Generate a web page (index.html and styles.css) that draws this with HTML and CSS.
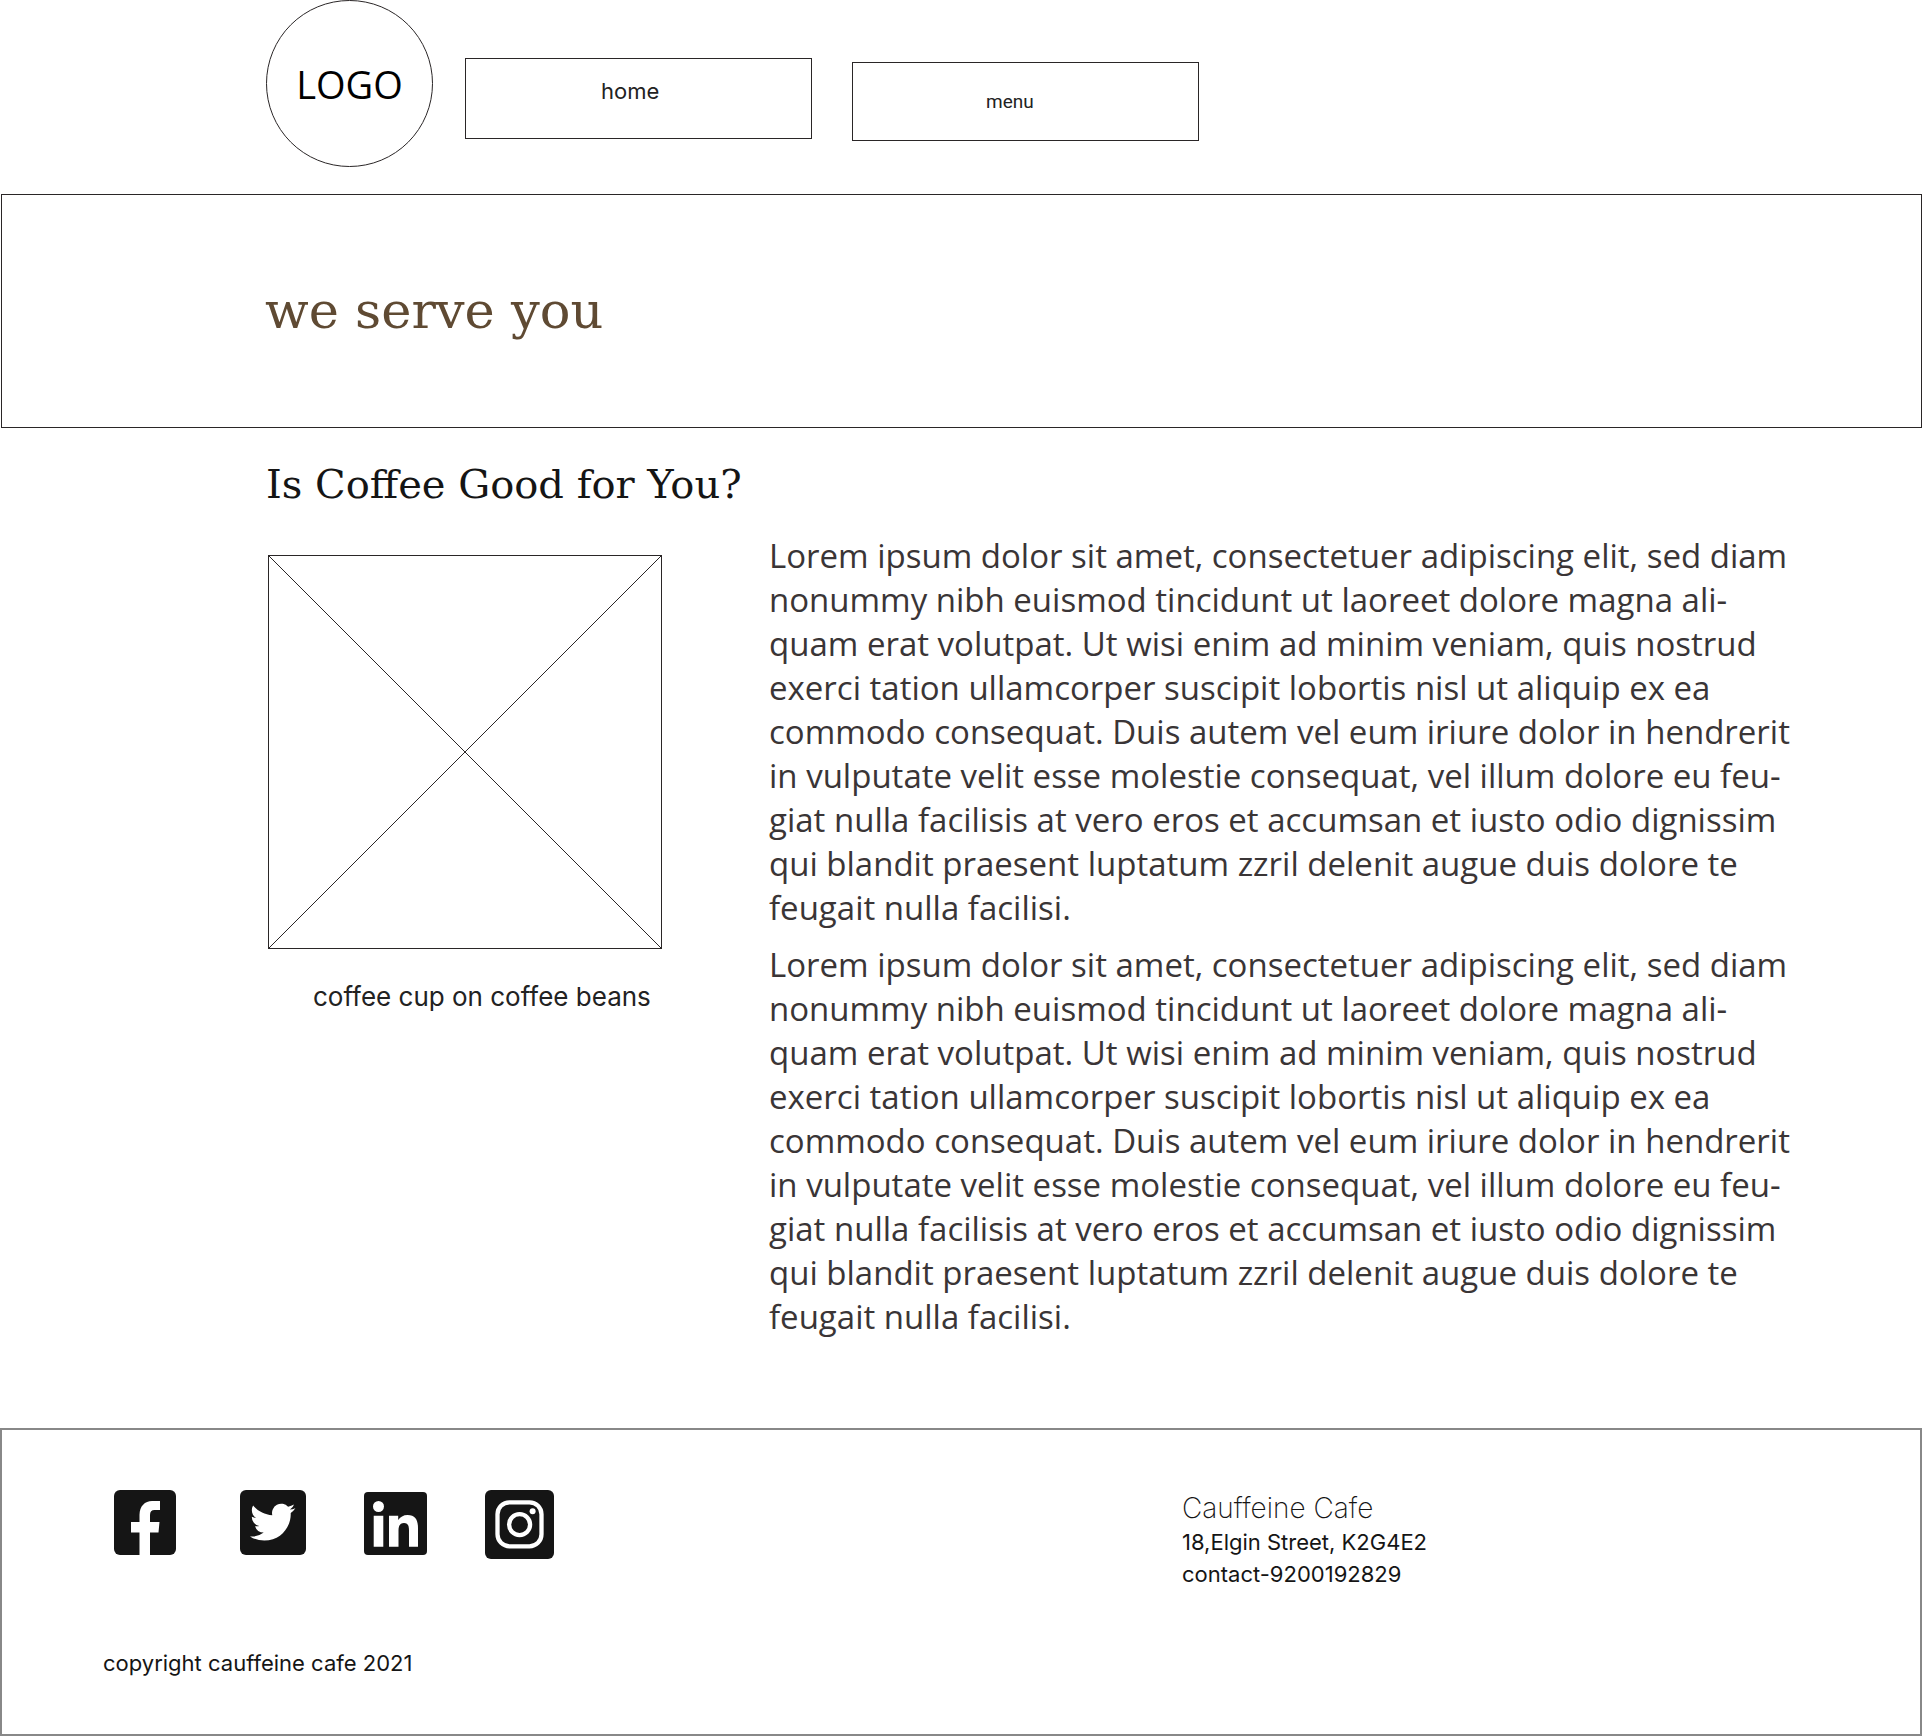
FILE: index.html
```html
<!DOCTYPE html>
<html lang="en">
<head>
<meta charset="utf-8">
<meta name="viewport" content="width=device-width, initial-scale=1">
<title>Cauffeine Cafe</title>
<link rel="stylesheet" href="styles.css">
</head>
<body>
<header class="site-header">
  <a class="logo" href="#">LOGO</a>
  <nav class="site-nav">
    <a class="nav-link" href="#">home</a>
    <a class="nav-link nav-link-menu" href="#">menu</a>
  </nav>
</header>

<section class="hero">
  <h1 class="hero-title">we serve you</h1>
</section>

<main class="article">
  <h2 class="article-title">Is Coffee Good for You?</h2>
  <div class="article-body">
    <figure class="figure">
      <svg class="placeholder" viewBox="0 0 394 394" role="img" aria-label="coffee cup on coffee beans">
        <rect x="0.5" y="0.5" width="393" height="393"/>
        <path d="M0.5 0.5L393.5 393.5M393.5 0.5L0.5 393.5"/>
      </svg>
      <figcaption class="caption">coffee cup on coffee beans</figcaption>
    </figure>
    <div class="copy">
      <p>Lorem ipsum dolor sit amet, consectetuer adipiscing elit, sed diam<br>nonummy nibh euismod tincidunt ut laoreet dolore magna ali-<br>quam erat volutpat. Ut wisi enim ad minim veniam, quis nostrud<br>exerci tation ullamcorper suscipit lobortis nisl ut aliquip ex ea<br>commodo consequat. Duis autem vel eum iriure dolor in hendrerit<br>in vulputate velit esse molestie consequat, vel illum dolore eu feu-<br>giat nulla facilisis at vero eros et accumsan et iusto odio dignissim<br>qui blandit praesent luptatum zzril delenit augue duis dolore te<br>feugait nulla facilisi.</p>
      <p>Lorem ipsum dolor sit amet, consectetuer adipiscing elit, sed diam<br>nonummy nibh euismod tincidunt ut laoreet dolore magna ali-<br>quam erat volutpat. Ut wisi enim ad minim veniam, quis nostrud<br>exerci tation ullamcorper suscipit lobortis nisl ut aliquip ex ea<br>commodo consequat. Duis autem vel eum iriure dolor in hendrerit<br>in vulputate velit esse molestie consequat, vel illum dolore eu feu-<br>giat nulla facilisis at vero eros et accumsan et iusto odio dignissim<br>qui blandit praesent luptatum zzril delenit augue duis dolore te<br>feugait nulla facilisi.</p>
    </div>
  </div>
</main>

<footer class="site-footer">
  <div class="footer-top">
    <div class="social">
      <a href="#" aria-label="Facebook">
        <svg width="62" height="65" viewBox="0 0 62 65">
          <rect width="62" height="65" rx="6" fill="#151515"/>
          <path fill="#fff" d="M25.5 65V42.5H17V32H25.5V25C25.5 16 31 11 38 11H46V20H40.5C37.5 20 36 21.500 36 25V32H45.500L44.500 42.500H36V65Z"/>
        </svg>
      </a>
      <a href="#" aria-label="Twitter">
        <svg width="66" height="65" viewBox="0 0 66 65">
          <rect width="66" height="65" rx="6" fill="#151515"/>
          <path fill="#fff" transform="translate(10 9.5) scale(1.89)" d="M23.953 4.57a10 10 0 01-2.825.775 4.958 4.958 0 002.163-2.723c-.951.555-2.005.959-3.127 1.184a4.92 4.92 0 00-8.384 4.482C7.69 8.095 4.067 6.13 1.64 3.162a4.822 4.822 0 00-.666 2.475c0 1.71.87 3.213 2.188 4.096a4.904 4.904 0 01-2.228-.616v.06a4.923 4.923 0 003.946 4.827 4.996 4.996 0 01-2.212.085 4.936 4.936 0 004.604 3.417 9.867 9.867 0 01-6.102 2.105c-.39 0-.779-.023-1.17-.067a13.995 13.995 0 007.557 2.209c9.053 0 13.998-7.496 13.998-13.985 0-.21 0-.42-.015-.63A9.935 9.935 0 0024 4.59z"/>
        </svg>
      </a>
      <a href="#" aria-label="LinkedIn">
        <svg width="63" height="65" viewBox="0 -2 63 65">
          <rect width="63" height="63" rx="4" fill="#151515"/>
          <circle cx="14.500" cy="14.500" r="5.500" fill="#fff"/>
          <path fill="#fff" d="M9.700 23.700H19.300V54.700H9.700ZM25 23.700H34.200V28C36 25 39.500 23 43.500 23C51.500 23 54 28 54 36V54.700H45V38.500C45 34 44 31 40 31C36 31 34.500 34 34.500 38.500V54.700H25Z"/>
        </svg>
      </a>
      <a href="#" aria-label="Instagram">
        <svg width="69" height="69" viewBox="0 0 69 69">
          <rect width="69" height="69" rx="6" fill="#151515"/>
          <g fill="none" stroke="#fff" stroke-width="4.300">
            <rect x="12.500" y="12.300" width="44" height="44" rx="12"/>
            <circle cx="34.600" cy="34.600" r="10.500"/>
          </g>
          <circle cx="47.600" cy="21.300" r="3" fill="#fff"/>
        </svg>
      </a>
    </div>
    <address class="contact">
      <strong class="contact-name">Cauffeine Cafe</strong>
      <span>18,Elgin Street, K2G4E2</span>
      <span>contact-9200192829</span>
    </address>
  </div>
  <p class="copyright">copyright cauffeine cafe 2021</p>
</footer>
</body>
</html>
```
FILE: styles.css
```css
* {
  box-sizing: border-box;
}

body {
  margin: 0;
  background: #fff;
  color: #222;
  font-family: Inter, "Liberation Sans", sans-serif;
  font-size: 22px;
  line-height: 32px;
}

h1,
h2,
p,
figure {
  margin: 0;
}

a {
  color: inherit;
  text-decoration: none;
}

.site-header {
  display: flex;
  gap: 32px;
  padding: 0 32px 27px 266px;
}

.logo {
  display: grid;
  place-items: center;
  width: 167px;
  height: 167px;
  border: 1px solid #2a2627;
  border-radius: 50%;
  color: #000;
  font-family: "Open Sans", sans-serif;
  font-size: 38px;
}

.site-nav {
  display: flex;
  align-items: flex-start;
  gap: 40px;
  padding-top: 58px;
}

.nav-link {
  width: 347px;
  padding: 17px 0 32px 135px;
  border: 1px solid #2a2627;
  line-height: 30px;
}

.nav-link-menu {
  margin-top: 4px;
  padding: 24px 0 23px 133px;
  font-family: Roboto, "Liberation Sans", sans-serif;
  font-size: 19px;
}

.hero {
  margin-left: 1px;
  padding: 86px 32px 86px 263px;
  border: 1px solid #2a2627;
}

.hero-title {
  color: #5f4a33;
  font: 400 51px/60px "DejaVu Serif", serif;
}

.article {
  padding: 32px 32px 89px 266px;
}

.article-title {
  color: #151515;
  font: 400 40px/48px "DejaVu Serif", serif;
}

.article-body {
  display: flex;
  gap: 107px;
  padding: 26px 0 0 2px;
}

.figure {
  flex: 0 0 394px;
  padding-top: 21px;
}

.placeholder {
  display: block;
  width: 100%;
  fill: none;
  stroke: #2a2627;
}

.caption {
  padding: 32px 0 0 45px;
  font-size: 26px;
}

.copy {
  display: flex;
  flex: 1;
  flex-direction: column;
  gap: 13px;
  color: #3a3536;
  font: 33px/44px "Open Sans", sans-serif;
}

.site-footer {
  padding: 60px 32px 55px 101px;
  border: 2px solid #888;
  color: #151515;
}

.footer-top {
  display: grid;
  grid-template-columns: 1079px 1fr;
}

.social {
  display: grid;
  grid-template-columns: 126px 124px 121px 69px;
  padding-left: 11px;
}

.social svg {
  display: block;
}

.contact {
  display: flex;
  flex-direction: column;
  font-style: normal;
}

.contact-name {
  font-size: 28px;
  font-weight: 200;
  line-height: 36px;
}

.copyright {
  padding-top: 57px;
}
```
